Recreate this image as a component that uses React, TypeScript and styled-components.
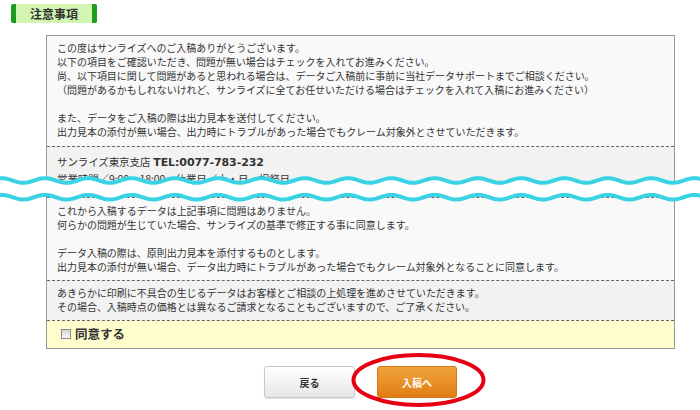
import React from "react";
import styled, { createGlobalStyle } from "styled-components";

const Global = createGlobalStyle`
  html, body { margin: 0; padding: 0; background: #fff; }
  body { font-family: "Noto Sans CJK JP", "Noto Sans", sans-serif; color: #333; }
`;

const Page = styled.div`
  position: relative;
  width: 700px;
  height: 410px;
  overflow: hidden;
  background: #fff;
  display: flex;
  flex-direction: column;
  padding-top: 4px;
  box-sizing: border-box;
`;

const Header = styled.div`
  display: flex;
  padding-left: 11px;
`;

const Badge = styled.h2`
  margin: 0;
  height: 19px;
  box-sizing: border-box;
  padding: 0 14px;
  background: #d2f6b2;
  border-left: 5px solid #1e9a1e;
  border-right: 5px solid #1e9a1e;
  border-radius: 2px;
  font-size: 12px;
  font-weight: 700;
  line-height: 19px;
  color: #333;
  letter-spacing: 0;
`;

const Panel = styled.div`
  margin: 12px 0 0 46px;
  width: 629px;
  border: 1px solid #999;
  box-sizing: border-box;
  display: flex;
  flex-direction: column;
`;

const Section = styled.div<{ $bg: string; $pt: number; $pb: number }>`
  background: ${(p) => p.$bg};
  padding: ${(p) => p.$pt}px 10px ${(p) => p.$pb}px 10px;
  border-top: 1px dashed #666;
  &:first-child { border-top: none; }
  font-size: 10px;
  line-height: 14px;
  letter-spacing: -0.03px;
  color: #333;
`;

const Line = styled.div`
  white-space: nowrap;
  min-height: 14px;
`;

const ContactLine = styled.div`
  white-space: nowrap;
  font-size: 10.5px;
  line-height: 16px;
  letter-spacing: -0.1px;
`;

const Tel = styled.span`
  font-family: "DejaVu Sans", sans-serif;
  font-weight: 700;
  font-size: 11px;
  letter-spacing: -0.1px;
  margin-left: 3px;
`;

const AgreeRow = styled.label`
  display: flex;
  align-items: center;
  gap: 4px;
  height: 28px;
  padding-left: 14px;
  padding-bottom: 2px;
  box-sizing: border-box;
  background: #fffdcc;
  border-top: 1px dashed #666;
  font-size: 12.5px;
  font-weight: 700;
  color: #333;
`;

const Check = styled.input`
  appearance: none;
  margin: 0;
  width: 10px;
  height: 10px;
  border: 1px solid #8a8a8a;
  background: linear-gradient(#d6d6d6, #f8f8f8);
  box-sizing: border-box;
`;

const ButtonRow = styled.div`
  margin: 17px 0 0 46px;
  width: 629px;
  display: flex;
  justify-content: center;
  gap: 22px;
`;

const Button = styled.button<{ $primary?: boolean; $w: number }>`
  width: ${(p) => p.$w}px;
  height: 32px;
  border-radius: 3px;
  font-family: "Noto Sans CJK JP", sans-serif;
  font-size: 10px;
  font-weight: 700;
  cursor: pointer;
  color: ${(p) => (p.$primary ? "#fff" : "#333")};
  border: 1px solid ${(p) => (p.$primary ? "#d27a18" : "#c8c8c8")};
  background: ${(p) =>
    p.$primary
      ? "linear-gradient(#f0a43c, #e27c14)"
      : "linear-gradient(#ffffff, #e6e6e6)"};
  box-shadow: ${(p) => (p.$primary ? "none" : "0 1px 1px rgba(0,0,0,0.12)")};
`;

const WaveOverlay = styled.svg`
  position: absolute;
  left: 0;
  top: 172px;
  width: 700px;
  height: 32px;
  pointer-events: none;
`;

const CircleOverlay = styled.svg`
  position: absolute;
  left: 351px;
  top: 352px;
  width: 136px;
  height: 56px;
  pointer-events: none;
`;

const P = 43.3;
const A = 2.3;
const X0 = 1.7;

function wavePts(cy: number): [number, number][] {
  const pts: [number, number][] = [];
  for (let x = -2; x <= 702; x += 1) {
    const y = cy - A * Math.cos((2 * Math.PI * (x - X0)) / P);
    pts.push([x, +y.toFixed(2)]);
  }
  return pts;
}

const w1 = wavePts(8.5);
const w2 = wavePts(25.2);
const toPath = (pts: [number, number][]) =>
  pts.map((p, i) => `${i ? "L" : "M"}${p[0]} ${p[1]}`).join(" ");
const fillPath =
  toPath(w1) +
  " " +
  [...w2].reverse().map((p) => `L${p[0]} ${p[1]}`).join(" ") +
  " Z";

const sec1 = [
  "この度はサンライズへのご入稿ありがとうございます。",
  "以下の項目をご確認いただき、問題が無い場合はチェックを入れてお進みください。",
  "尚、以下項目に関して問題があると思われる場合は、データご入稿前に事前に当社データサポートまでご相談ください。",
  "（問題があるかもしれないけれど、サンライズに全てお任せいただける場合はチェックを入れて入稿にお進みください）",
  "",
  "また、データをご入稿の際は出力見本を送付してください。",
  "出力見本の添付が無い場合、出力時にトラブルがあった場合でもクレーム対象外とさせていただきます。",
];

const sec3 = [
  "これから入稿するデータは上記事項に問題はありません。",
  "何らかの問題が生じていた場合、サンライズの基準で修正する事に同意します。",
  "",
  "データ入稿の際は、原則出力見本を添付するものとします。",
  "出力見本の添付が無い場合、データ出力時にトラブルがあった場合でもクレーム対象外となることに同意します。",
];

const sec4 = [
  "あきらかに印刷に不具合の生じるデータはお客様とご相談の上処理を進めさせていただきます。",
  "その場合、入稿時点の価格とは異なるご請求となることもございますので、ご了承ください。",
];

export default function App() {
  return (
    <>
      <Global />
      <Page>
        <Header>
          <Badge>注意事項</Badge>
        </Header>
        <Panel>
          <Section $bg="#f9f9f9" $pt={5} $pb={7}>
            {sec1.map((t, i) => (
              <Line key={i}>{t}</Line>
            ))}
          </Section>
          <Section $bg="#f2f2f2" $pt={7} $pb={10}>
            <ContactLine>
              サンライズ東京支店<Tel>TEL:0077-783-232</Tel>
            </ContactLine>
            <ContactLine>営業時間／9:00～18:00　休業日／土・日・祝祭日</ContactLine>
          </Section>
          <Section $bg="#f9f9f9" $pt={6} $pb={6}>
            {sec3.map((t, i) => (
              <Line key={i}>{t}</Line>
            ))}
          </Section>
          <Section $bg="#f2f2f2" $pt={5} $pb={6}>
            {sec4.map((t, i) => (
              <Line key={i}>{t}</Line>
            ))}
          </Section>
          <AgreeRow>
            <Check type="checkbox" />
            同意する
          </AgreeRow>
        </Panel>
        <ButtonRow>
          <Button $w={91}>戻る</Button>
          <Button $w={80} $primary>
            入稿へ
          </Button>
        </ButtonRow>
        <WaveOverlay viewBox="0 0 700 32">
          <path d={fillPath} fill="#fff" />
          <path d={toPath(w1)} fill="none" stroke="#3ad3e6" strokeWidth={4} />
          <path d={toPath(w2)} fill="none" stroke="#3ad3e6" strokeWidth={4} />
        </WaveOverlay>
        <CircleOverlay viewBox="0 0 136 56">
          <ellipse cx={67.5} cy={28} rx={65} ry={25} fill="none" stroke="#e60012" strokeWidth={4} />
        </CircleOverlay>
      </Page>
    </>
  );
}
